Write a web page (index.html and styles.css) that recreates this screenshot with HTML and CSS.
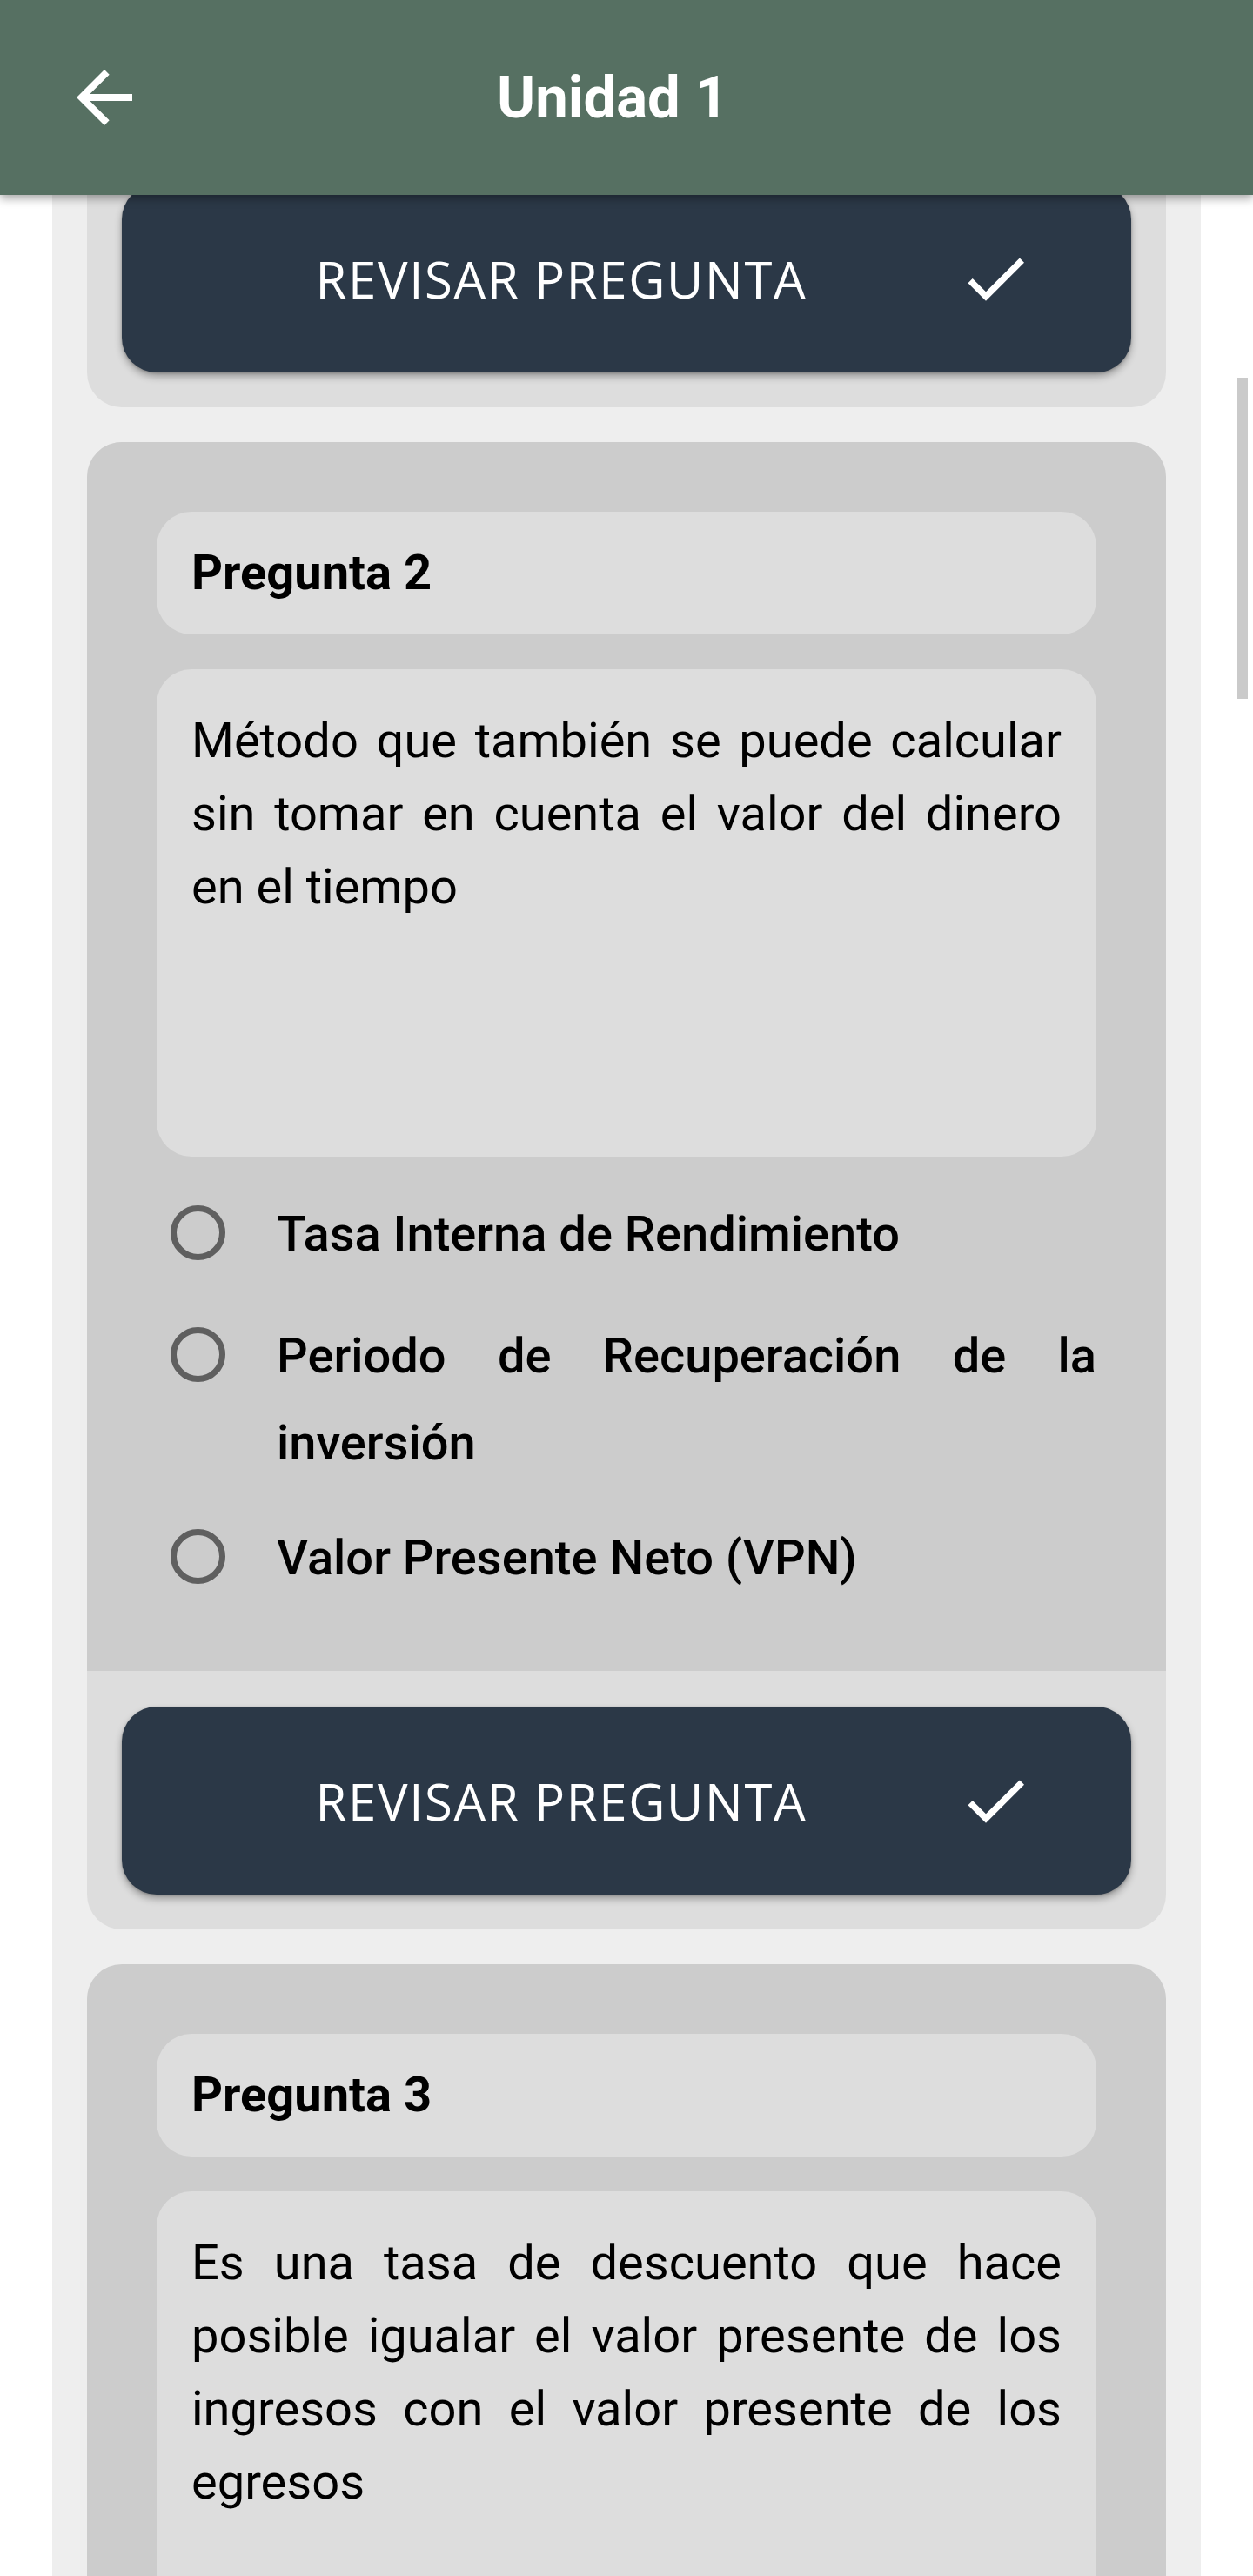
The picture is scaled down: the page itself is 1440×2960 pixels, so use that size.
FILE: index.html
```html
<!DOCTYPE html>
<html lang="es">
<head>
<meta charset="utf-8">
<title>Unidad 1</title>
<link rel="stylesheet" href="styles.css">
</head>
<body>
<header class="appbar">
  <button class="appbar__back" aria-label="Volver">
    <svg viewBox="0 0 24 24"><path d="M20 11H7.83l5.59-5.59L12 4l-8 8 8 8 1.41-1.41L7.83 13H20v-2z"/></svg>
  </button>
  <h1 class="appbar__title">Unidad 1</h1>
</header>

<main class="column">
  <section class="card card--scrolled">
    <div class="card__body card__body--scrolled"></div>
    <div class="card__footer">
      <button class="check-btn">
        <span class="check-btn__label">REVISAR PREGUNTA</span>
        <svg class="check-btn__icon" viewBox="0 0 24 24"><path d="M9 16.17L4.83 12l-1.42 1.41L9 19 21 7l-1.41-1.41z"/></svg>
      </button>
    </div>
  </section>

  <section class="card">
    <div class="card__body">
      <div class="label-box">Pregunta 2</div>
      <div class="question">Método que también se puede calcular sin tomar en cuenta el valor del dinero en el tiempo</div>
      <div class="options">
        <label class="option"><span class="radio"></span><span class="option__text">Tasa Interna de Rendimiento</span></label>
        <label class="option"><span class="radio"></span><span class="option__text">Periodo de Recuperación de la inversión</span></label>
        <label class="option"><span class="radio"></span><span class="option__text">Valor Presente Neto (VPN)</span></label>
      </div>
    </div>
    <div class="card__footer">
      <button class="check-btn">
        <span class="check-btn__label">REVISAR PREGUNTA</span>
        <svg class="check-btn__icon" viewBox="0 0 24 24"><path d="M9 16.17L4.83 12l-1.42 1.41L9 19 21 7l-1.41-1.41z"/></svg>
      </button>
    </div>
  </section>

  <section class="card">
    <div class="card__body">
      <div class="label-box">Pregunta 3</div>
      <div class="question">Es una tasa de descuento que hace posible igualar el valor presente de los ingresos con el valor presente de los egresos</div>
    </div>
  </section>
</main>

<div class="scrollbar"></div>
</body>
</html>
```

FILE: styles.css
```css
* {
  box-sizing: border-box;
}

html,
body {
  margin: 0;
  background: #ffffff;
}

body {
  font-family: Roboto, "Noto Sans", "Liberation Sans", sans-serif;
  color: #000000;
}

.appbar {
  position: fixed;
  top: 0;
  left: 0;
  right: 0;
  height: 224px;
  background: #567062;
  display: flex;
  align-items: center;
  padding-left: 72px;
  box-shadow: 0 4px 10px rgba(0, 0, 0, 0.35);
  z-index: 10;
}

.appbar__back {
  width: 96px;
  height: 96px;
  padding: 0;
  border: 0;
  background: none;
  display: flex;
  flex: none;
}

.appbar__back svg {
  width: 96px;
  height: 96px;
  fill: #ffffff;
}

.appbar__title {
  flex: 1;
  margin: 0;
  padding-right: 200px;
  text-align: center;
  font-size: 67px;
  font-weight: 700;
  line-height: 1;
  color: #ffffff;
}

.column {
  width: 1320px;
  margin-left: 60px;
  min-height: 100vh;
  background: #eeeeee;
  padding: 0 40px 40px;
  display: flex;
  flex-direction: column;
  gap: 40px;
}

.card {
  background: #dddddd;
  border-radius: 40px;
  overflow: hidden;
}

.card--scrolled {
  border-radius: 0 0 40px 40px;
}

.card__body {
  background: #cccccc;
  padding: 80px 80px 72px;
}

.card__body--scrolled {
  height: 171px;
  padding: 0;
}

.card__footer {
  padding: 41px 40px 40px;
}

.check-btn {
  width: 100%;
  height: 216px;
  border: 0;
  border-radius: 40px;
  background: #2b3847;
  color: #ffffff;
  display: grid;
  grid-template-columns: 1fr 88px;
  align-items: center;
  padding: 0 112px 0 50px;
  box-shadow: 0 5px 9px rgba(0, 0, 0, 0.3), 0 1px 3px rgba(0, 0, 0, 0.2);
  font-family: "Open Sans", "Noto Sans", sans-serif;
  font-size: 58px;
  font-weight: 400;
  letter-spacing: 1.7px;
}

.check-btn__label {
  text-align: center;
}

.check-btn__icon {
  width: 88px;
  height: 88px;
  fill: #ffffff;
}

.label-box {
  background: #dddddd;
  border-radius: 40px;
  padding: 38px 40px;
  font-size: 56px;
  font-weight: 700;
  line-height: 65px;
}

.question {
  margin-top: 40px;
  background: #dddddd;
  border-radius: 40px;
  padding: 40px;
  min-height: 560px;
  font-size: 56px;
  line-height: 84px;
  text-align: justify;
}

.options {
  margin-top: 39px;
  display: flex;
  flex-direction: column;
  gap: 32px;
}

.option {
  display: flex;
  align-items: flex-start;
  min-height: 108px;
}

.radio {
  flex: none;
  width: 63px;
  height: 63px;
  margin: 17px 0 0 16px;
  border: 7px solid #5f5f5f;
  border-radius: 50%;
}

.option__text {
  flex: 1;
  margin-left: 59px;
  font-size: 56px;
  font-weight: 500;
  line-height: 100px;
  text-align: justify;
}

.scrollbar {
  position: fixed;
  top: 434px;
  right: 6px;
  width: 12px;
  height: 369px;
  background: #cacaca;
}
```
